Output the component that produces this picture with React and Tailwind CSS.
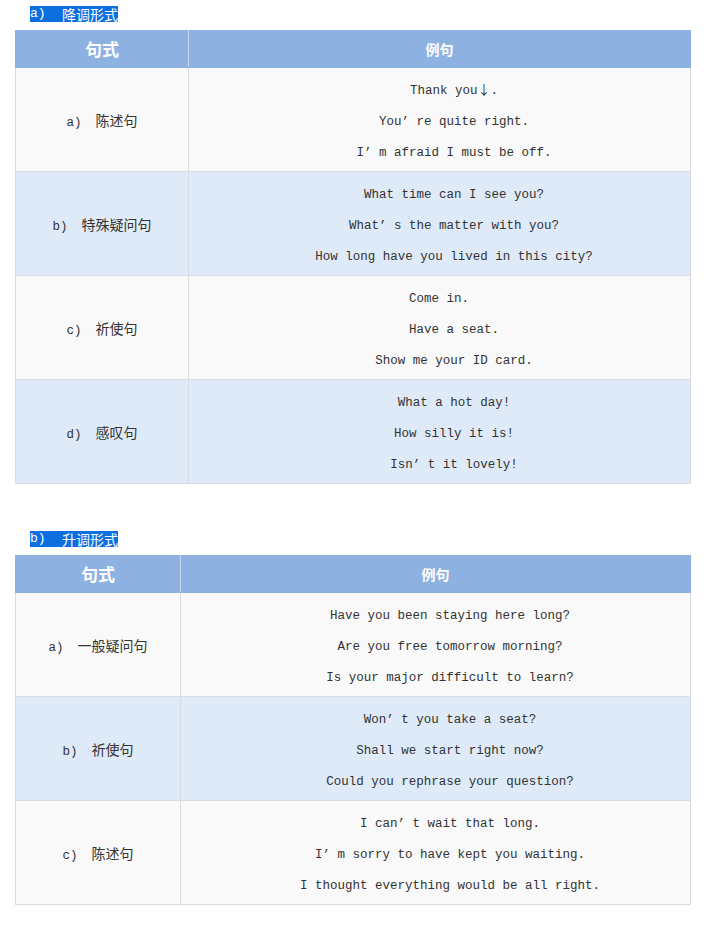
import React from "react";

const mono = "font-['Liberation_Mono',monospace]";
const cjk = "font-['Noto_Sans_CJK_SC','Noto_Sans',sans-serif]";

const tables = [
  {
    label: "a)",
    title: "降调形式",
    leftWidth: "w-[173px]",
    rows: [
      { tag: "a)", name: "陈述句", lines: ["Thank you↓.", "You’ re quite right.", "I’ m afraid I must be off."] },
      { tag: "b)", name: "特殊疑问句", lines: ["What time can I see you?", "What’ s the matter with you?", "How long have you lived in this city?"] },
      { tag: "c)", name: "祈使句", lines: ["Come in.    ", "Have a seat.", "Show me your ID card."] },
      { tag: "d)", name: "感叹句", lines: ["What a hot day!", "How silly it is!", "Isn’ t it lovely!"] },
    ],
  },
  {
    label: "b)",
    title: "升调形式",
    leftWidth: "w-[165px]",
    rows: [
      { tag: "a)", name: "一般疑问句", lines: ["Have you been staying here long?", "Are you free tomorrow morning?", "Is your major difficult to learn?"] },
      { tag: "b)", name: "祈使句", lines: ["Won’ t you take a seat?", "Shall we start right now?", "Could you rephrase your question?"] },
      { tag: "c)", name: "陈述句", lines: ["I can’ t wait that long.", "I’ m sorry to have kept you waiting.", "I thought everything would be all right."] },
    ],
  },
];

// the down arrow is a full-width glyph in the original
const Line = ({ text }) => {
  if (!text.includes("↓")) return text;
  const [before, after] = text.split("↓");
  return (
    <>
      {before}
      <span className={`${cjk} inline-block leading-none text-[13px]`}>↓</span>
      {after}
    </>
  );
};

const Section = ({ table }) => (
  <div>
    <div className="flex pl-[15px] pt-[6px] pb-[8px]">
      <div className="flex items-center h-[16px] bg-[#0d6ee0] text-white">
        <span className={`${mono} text-[13px] leading-[16px] w-[32px]`}>{table.label}</span>
        <span className={`${cjk} text-[14px] leading-[16px]`}>{table.title}</span>
      </div>
    </div>
    <table className="w-[676px] border-collapse table-fixed">
      <thead>
        <tr className="bg-[#8db1e1] h-[37px]">
          <th className={`${table.leftWidth} border border-[#8db1e1] border-r-[#c9daf1] ${cjk} text-[17px] font-bold text-white`}>
            句式
          </th>
          <th className={`border border-[#8db1e1] ${cjk} text-[14px] font-bold text-white`}>例句</th>
        </tr>
      </thead>
      <tbody>
        {table.rows.map((row, i) => (
          <tr key={i} className={i % 2 === 0 ? "bg-[#f9f9f9]" : "bg-[#deeaf8]"}>
            <td className="border border-[#d9dde3] h-[104px] pt-[2px] text-center text-[#333]">
              <span className={`${mono} text-[12.5px]`}>{row.tag}</span>
              <span className={`${cjk} text-[14px] ml-[14px]`}>{row.name}</span>
            </td>
            <td className={`border border-[#d9dde3] pt-[6px] pl-[29px] text-center ${mono} text-[12.5px] text-[#333] leading-[31px]`}>
              {row.lines.map((line) => (
                <div key={line} className="whitespace-pre">
                  <Line text={line} />
                </div>
              ))}
            </td>
          </tr>
        ))}
      </tbody>
    </table>
  </div>
);

export default function App() {
  return (
    <div className="w-[713px] min-h-[925px] bg-white pl-[15px]">
      <Section table={tables[0]} />
      <div className="h-[41px]" />
      <Section table={tables[1]} />
    </div>
  );
}
